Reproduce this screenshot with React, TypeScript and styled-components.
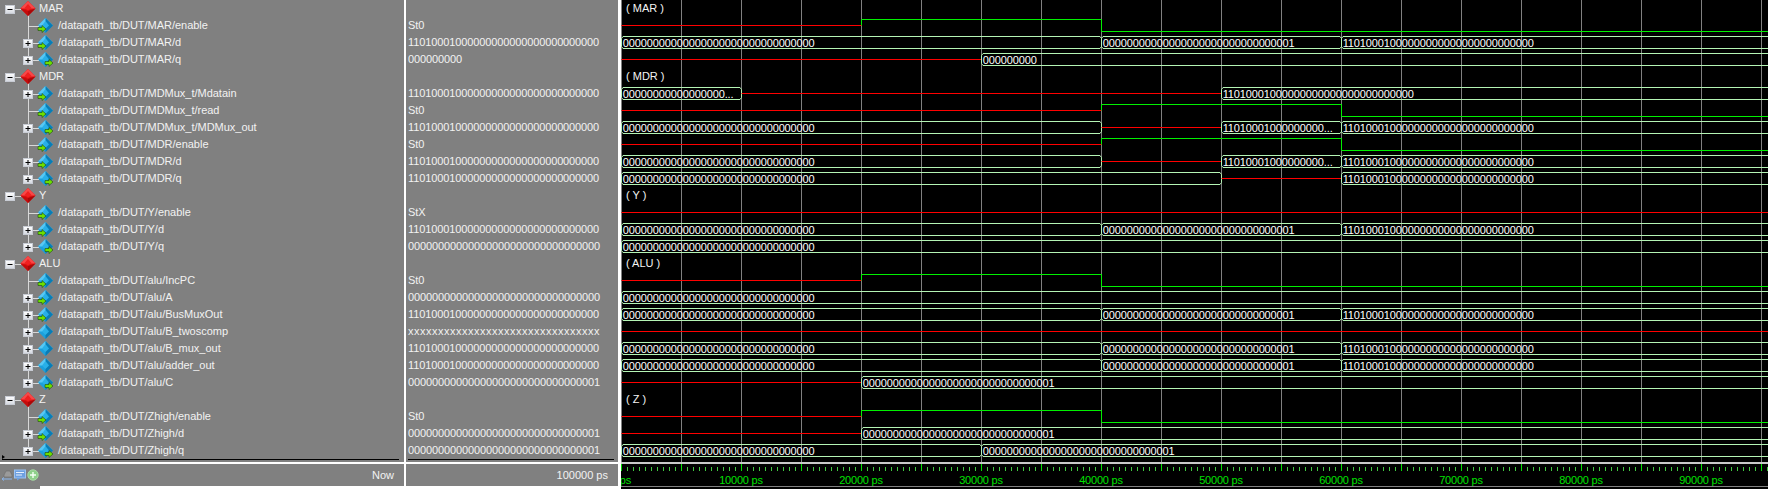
import styled, { createGlobalStyle } from "styled-components";

const GlobalStyle = createGlobalStyle`
  html, body {
    margin: 0;
    height: 100%;
    background: #fff;
    overflow: hidden;
  }
`;

const Page = styled.div`
  display: flex;
  width: 1768px;
  height: 489px;
  font-family: "Liberation Sans", Arial, sans-serif;
  font-size: 11px;
  color: #f2f2f2;
`;

const Pane = styled.div<{ $width: number; $edge: number }>`
  display: flex;
  flex-direction: column;
  flex: none;
  width: ${(p) => p.$width}px;
  background: #808080;
  border-right: ${(p) => p.$edge}px solid #fff;
`;

const RowList = styled.div`
  height: 459px;
`;

const Row = styled.div`
  display: flex;
  align-items: center;
  height: 17px;
  line-height: 17px;
  white-space: nowrap;
`;

const TreeIcon = styled.svg`
  flex: none;
  display: block;
  width: 58px;
  height: 17px;
`;

const GroupName = styled.span`
  margin-left: -19px;
`;

const SignalName = styled.span`
  letter-spacing: -0.02px;
`;

const SignalValue = styled.span<{ $unknown: boolean }>`
  padding-left: 2px;
  letter-spacing: ${(p) => (p.$unknown ? "0.5px" : "-0.12px")};
`;

const BlackRule = styled.div<{ $left: number; $right: number; $mark?: boolean }>`
  position: relative;
  height: 1px;
  margin: 0 ${(p) => p.$right}px 2px ${(p) => p.$left}px;
  background: #000;

  ${(p) =>
    p.$mark &&
    `
    &::before {
      content: "";
      position: absolute;
      left: 0;
      top: -4px;
      border-left: 3px solid #000;
      border-top: 2px solid transparent;
      border-bottom: 2px solid transparent;
    }
  `}
`;

const WhiteBar = styled.div`
  height: 2px;
  background: #fff;
`;

const Footer = styled.div`
  display: flex;
  align-items: center;
  justify-content: space-between;
  height: 22px;
  padding: 0 10px 0 2px;
`;

const ToolIcons = styled.div`
  display: flex;
  align-items: center;
  gap: 1px;
`;

const BottomWhite = styled.div`
  display: flex;
  height: 3px;
  background: #fff;
`;

const BottomGray = styled.div`
  width: 40px;
  background: #808080;
`;

const WavePane = styled.div`
  display: flex;
  flex-direction: column;
  flex: 1;
  min-width: 0;
  background: #000;
`;

const WaveChart = styled.svg`
  display: block;
  flex: none;
  width: 1147px;
  height: 462px;
`;

const WaveBar = styled.div`
  height: 2px;
  background: #c8c8c8;
`;

const Timeline = styled.svg`
  display: block;
  flex: none;
  width: 1147px;
  height: 22px;
  border-bottom: 1px solid #808080;
`;

const BusText = styled.text`
  font-size: 11px;
  letter-spacing: -0.12px;
  fill: #fff;
`;

const GroupText = styled.text`
  font-size: 11px;
  fill: #f4f4f4;
`;

const TimeText = styled.text`
  font-size: 11px;
  letter-spacing: -0.2px;
  fill: #00e000;
  text-anchor: middle;
`;

type Port = "in" | "out" | "none";

type Signal = {
  name: string;
  value: string;
  port: Port;
  wave: Seg[];
};

type Seg = {
  kind: "red" | "hi" | "lo" | "bus";
  from: number;
  to: number;
  text?: string;
};

type Group = { label: string; signals: Signal[] };

const END = 100000;
const V1 = "11010001" + "0".repeat(24);
const ZERO = "0".repeat(32);
const ONE = "0".repeat(31) + "1";
const UNKNOWN = "x".repeat(32);
const P = "/datapath_tb/DUT/";

const bus = (from: number, to: number, text: string): Seg => ({ kind: "bus", from, to, text });
const seg = (kind: Seg["kind"], from: number, to: number): Seg => ({ kind, from, to });

const pulse20 = [seg("red", 0, 20000), seg("hi", 20000, 40000), seg("lo", 40000, END)];
const pulse40 = [seg("red", 0, 40000), seg("hi", 40000, 60000), seg("lo", 60000, END)];
const step3 = [bus(0, 40000, ZERO), bus(40000, 60000, ONE), bus(60000, END, V1)];
const muxWave = [
  bus(0, 40000, ZERO),
  seg("red", 40000, 50000),
  bus(50000, 60000, "11010001000000000..."),
  bus(60000, END, V1),
];

const groups: Group[] = [
  {
    label: "MAR",
    signals: [
      { name: "MAR/enable", value: "St0", port: "in", wave: pulse20 },
      { name: "MAR/d", value: V1, port: "in", wave: step3 },
      {
        name: "MAR/q",
        value: "000000000",
        port: "out",
        wave: [seg("red", 0, 30000), bus(30000, END, "000000000")],
      },
    ],
  },
  {
    label: "MDR",
    signals: [
      {
        name: "MDMux_t/Mdatain",
        value: V1,
        port: "in",
        wave: [bus(0, 10000, "00000000000000000..."), seg("red", 10000, 50000), bus(50000, END, V1)],
      },
      { name: "MDMux_t/read", value: "St0", port: "in", wave: pulse40 },
      { name: "MDMux_t/MDMux_out", value: V1, port: "out", wave: muxWave },
      { name: "MDR/enable", value: "St0", port: "in", wave: pulse40 },
      { name: "MDR/d", value: V1, port: "in", wave: muxWave },
      {
        name: "MDR/q",
        value: V1,
        port: "out",
        wave: [bus(0, 50000, ZERO), seg("red", 50000, 60000), bus(60000, END, V1)],
      },
    ],
  },
  {
    label: "Y",
    signals: [
      { name: "Y/enable", value: "StX", port: "in", wave: [seg("red", 0, END)] },
      { name: "Y/d", value: V1, port: "in", wave: step3 },
      { name: "Y/q", value: ZERO, port: "out", wave: [bus(0, END, ZERO)] },
    ],
  },
  {
    label: "ALU",
    signals: [
      { name: "alu/IncPC", value: "St0", port: "in", wave: pulse20 },
      { name: "alu/A", value: ZERO, port: "in", wave: [bus(0, END, ZERO)] },
      { name: "alu/BusMuxOut", value: V1, port: "in", wave: step3 },
      { name: "alu/B_twoscomp", value: UNKNOWN, port: "none", wave: [seg("red", 0, END)] },
      { name: "alu/B_mux_out", value: V1, port: "none", wave: step3 },
      { name: "alu/adder_out", value: V1, port: "none", wave: step3 },
      { name: "alu/C", value: ONE, port: "out", wave: [seg("red", 0, 20000), bus(20000, END, ONE)] },
    ],
  },
  {
    label: "Z",
    signals: [
      { name: "Zhigh/enable", value: "St0", port: "in", wave: pulse20 },
      { name: "Zhigh/d", value: ONE, port: "in", wave: [seg("red", 0, 20000), bus(20000, END, ONE)] },
      { name: "Zhigh/q", value: ONE, port: "out", wave: [bus(0, 30000, ZERO), bus(30000, END, ONE)] },
    ],
  },
];

const timeX = (t: number) => Math.floor(t * 0.012) + 0.5;

const ExpandBox = ({ x, open }: { x: number; open: boolean }) => (
  <g>
    <rect x={x} y={5.5} width={9} height={8} fill="url(#boxFill)" stroke="#c8ccd4" />
    <path d={`M${x + 2} 9.5H${x + 7}`} stroke="#000" />
    {!open && <path d={`M${x + 4.5} 7V12`} stroke="#000" />}
  </g>
);

const BoxGradient = () => (
  <defs>
    <linearGradient id="boxFill" x1="0" y1="0" x2="0" y2="1">
      <stop offset="0" stopColor="#ffffff" />
      <stop offset="1" stopColor="#d4d8e0" />
    </linearGradient>
  </defs>
);

const GroupIcon = () => (
  <TreeIcon viewBox="0 0 58 17">
    <BoxGradient />
    <path d="M28.5 14V17" stroke="#d8d8d8" />
    <path d="M15 9.5H21" stroke="#d8d8d8" />
    <ExpandBox x={5.5} open />
    <polygon points="28,1 35.5,8.5 28,16 20.5,8.5" fill="#e01010" />
    <polygon points="28,1 35.5,8.5 28,8.5 20.5,8.5" fill="#f84848" />
    <polygon points="28,11 35.5,8.5 28,16" fill="#a80808" />
    <polygon points="28,11 20.5,8.5 28,16" fill="#c40c0c" />
    <polygon points="28,4 31.5,8 28,10.5 24.5,8" fill="#f02020" />
  </TreeIcon>
);

const SignalIcon = ({ port, last, bits }: { port: Port; last: boolean; bits: boolean }) => (
  <TreeIcon viewBox="0 0 58 17">
    <BoxGradient />
    <path d={last ? "M28.5 0V9" : "M28.5 0V17"} stroke="#d8d8d8" />
    <path d="M28.5 9.5H39" stroke="#d8d8d8" />
    {bits && <ExpandBox x={23.5} open={false} />}
    <polygon points="45.5,1 53,8.5 45.5,16 38,8.5" fill="#1ca0dc" />
    <polygon points="45.5,1 53,8.5 45.5,8.5 38,8.5" fill="#58c8f4" />
    <polygon points="45.5,1 53,8.5 45.5,16" fill="#0a7cb4" />
    <polygon points="45.5,4 49,8.5 45.5,12 42,8.5" fill="#28b0e8" />
    {port === "in" && (
      <path d="M38 10.5H42V8.5L46 12L42 15.5V13.5H38Z" fill="#6ee000" stroke="#1c4a10" strokeWidth={0.6} />
    )}
    {port === "out" && (
      <path d="M45 10.5H49V8.5L53 12L49 15.5V13.5H45Z" fill="#6ee000" stroke="#1c4a10" strokeWidth={0.6} />
    )}
  </TreeIcon>
);

const BusShape = ({ s, row }: { s: Seg; row: number }) => {
  const top = row * 17 + 2.5;
  const bottom = row * 17 + 14.5;
  const x0 = timeX(s.from);
  const x1 = timeX(s.to);
  const d = [
    `M${x0 + 1.5} ${top}`,
    `H${x1 - 1.5}`,
    `L${x1} ${top + 2}`,
    `V${bottom - 2}`,
    `L${x1 - 1.5} ${bottom}`,
    `H${x0 + 1.5}`,
    `L${x0} ${bottom - 2}`,
    `V${top + 2}`,
    "Z",
  ].join("");
  return (
    <g>
      <path d={d} fill="none" stroke="#b4f4b4" />
      <BusText x={x0 + 1.2} y={row * 17 + 13}>
        {s.text}
      </BusText>
    </g>
  );
};

const Track = ({ wave, row }: { wave: Seg[]; row: number }) => {
  const levelY = (kind: Seg["kind"]) =>
    row * 17 + (kind === "hi" ? 2.5 : kind === "lo" ? 14.5 : 8.5);
  return (
    <g>
      {wave.map((s, i) => {
        if (s.kind === "bus") return <BusShape key={i} s={s} row={row} />;
        const prev = wave[i - 1];
        const color = s.kind === "red" ? "#ff0000" : "#00f000";
        const y = levelY(s.kind);
        return (
          <g key={i}>
            {prev && prev.kind !== "bus" && (
              <line
                x1={timeX(s.from)}
                x2={timeX(s.from)}
                y1={levelY(prev.kind)}
                y2={y}
                stroke={color}
              />
            )}
            <line x1={timeX(s.from)} x2={timeX(s.to)} y1={y} y2={y} stroke={color} />
          </g>
        );
      })}
    </g>
  );
};

const App = () => {
  let row = 0;
  const rows = groups.flatMap((g) => {
    const head = { type: "group" as const, group: g, index: row++ };
    const kids = g.signals.map((s, i) => ({
      type: "signal" as const,
      signal: s,
      last: i === g.signals.length - 1,
      index: row++,
    }));
    return [head, ...kids];
  });

  const grid = Array.from({ length: 20 }, (_, i) => i * 60 + 0.5);
  const ticks = Array.from({ length: 192 }, (_, i) => i * 6 + 0.5);
  const labels = Array.from({ length: 10 }, (_, i) => i * 10000);

  return (
    <Page>
      <GlobalStyle />
      <Pane $width={404} $edge={2}>
        <RowList>
          {rows.map((r) =>
            r.type === "group" ? (
              <Row key={r.index}>
                <GroupIcon />
                <GroupName>{r.group.label}</GroupName>
              </Row>
            ) : (
              <Row key={r.index}>
                <SignalIcon
                  port={r.signal.port}
                  last={r.last}
                  bits={r.signal.value.length > 3}
                />
                <SignalName>
                  {P}
                  {r.signal.name}
                </SignalName>
              </Row>
            )
          )}
        </RowList>
        <BlackRule $left={2} $right={5} $mark />
        <WhiteBar />
        <Footer>
          <ToolIcons>
            <svg width="11" height="12" viewBox="0 0 11 12">
              <path d="M2 6L4 2H8L10 6V8H2Z" fill="#9a9a9a" stroke="#6a6a6a" strokeWidth={0.6} />
              <path d="M0 10H10M0 10L2 8.5M0 10L2 11.5" stroke="#8ab4e8" fill="none" />
            </svg>
            <svg width="12" height="12" viewBox="0 0 12 12">
              <rect x="0.5" y="1" width="11" height="8" fill="#6ea0e0" stroke="#9cc4f4" />
              <path d="M2 3.5H10M2 6H8" stroke="#e8f0fc" />
              <path d="M3 9H7L3 11.5Z" fill="#6ea0e0" />
            </svg>
            <svg width="12" height="12" viewBox="0 0 12 12">
              <circle cx="6" cy="6" r="5.2" fill="#8ed08a" stroke="#a8d8a4" />
              <path d="M6 3V9M3 6H9" stroke="#f4fff4" strokeWidth={1.4} />
            </svg>
          </ToolIcons>
          <span>Now</span>
        </Footer>
        <BottomWhite>
          <BottomGray />
        </BottomWhite>
      </Pane>
      <Pane $width={212} $edge={3}>
        <RowList>
          {rows.map((r) => (
            <Row key={r.index}>
              {r.type === "signal" && (
                <SignalValue $unknown={r.signal.value === UNKNOWN}>{r.signal.value}</SignalValue>
              )}
            </Row>
          ))}
        </RowList>
        <BlackRule $left={2} $right={4} />
        <WhiteBar />
        <Footer>
          <span />
          <span>100000 ps</span>
        </Footer>
        <BottomWhite />
      </Pane>
      <WavePane>
        <WaveChart viewBox="0 0 1147 462">
          {grid.map((x) => (
            <line key={x} x1={x} x2={x} y1={0} y2={462} stroke="#808080" />
          ))}
          {rows.map((r) =>
            r.type === "group" ? (
              <GroupText key={r.index} x={5} y={r.index * 17 + 12}>
                {`( ${r.group.label} )`}
              </GroupText>
            ) : (
              <Track key={r.index} wave={r.signal.wave} row={r.index} />
            )
          )}
        </WaveChart>
        <WaveBar />
        <Timeline viewBox="0 0 1147 22">
          {ticks.map((x, i) => (
            <line
              key={x}
              x1={x}
              x2={x}
              y1={i % 10 === 0 ? 0 : 3}
              y2={7}
              stroke={i % 10 === 0 ? "#00e000" : "#40c840"}
            />
          ))}
          {labels.map((t) => (
            <TimeText key={t} x={t * 0.012} y={20}>
              {t} ps
            </TimeText>
          ))}
        </Timeline>
      </WavePane>
    </Page>
  );
};

export default App;
